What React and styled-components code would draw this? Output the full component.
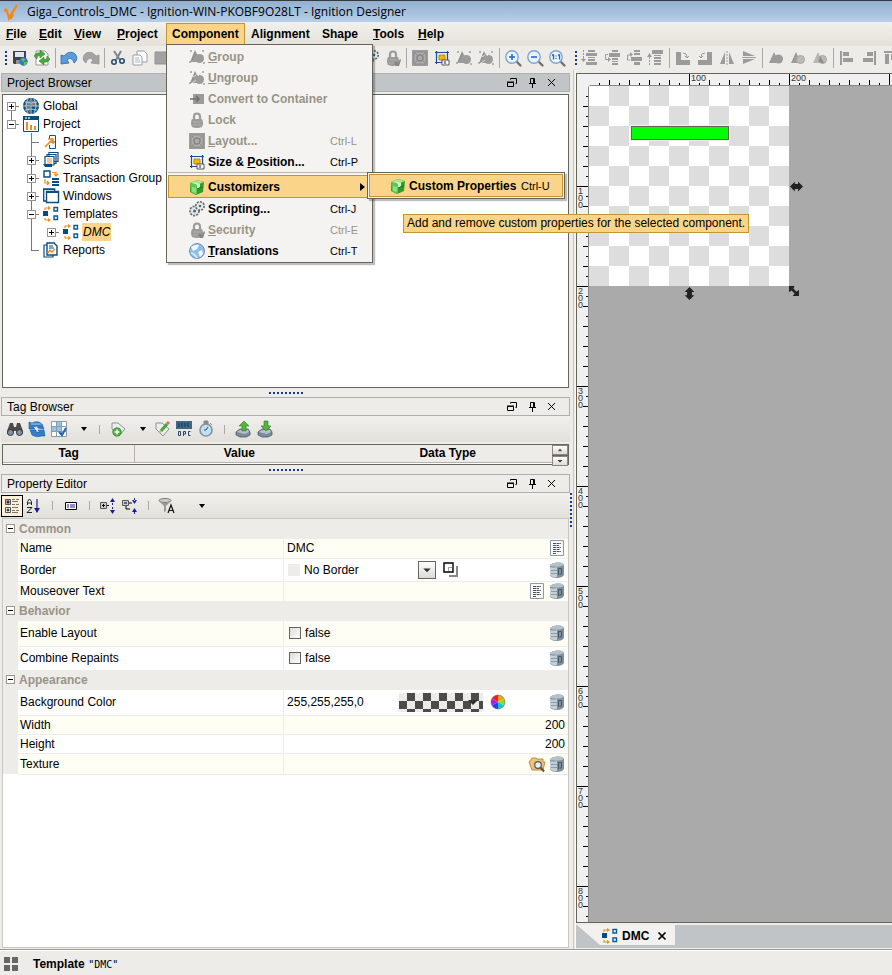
import React from "react";
import styled, { createGlobalStyle, css } from "styled-components";

const C = {
  face: "#edece8",
  line: "#b5b3ab",
  dark: "#66655c",
  amber: "#fad589",
  amberLine: "#c3952f",
  navy: "#1c3a7c",
  muted: "#989385",
  gray: "#9b9b9b",
};

const Global = createGlobalStyle`
  * { box-sizing: border-box; }
  body {
    margin: 0;
    background: ${C.face};
    color: #000;
    font: 12px/18px "Liberation Sans", Arial, sans-serif;
  }
  button, input, select { font: inherit; color: inherit; padding: 0; margin: 0; border: 0; background: none; border-radius: 0; }
  ul { list-style: none; margin: 0; padding: 0; }
`;

/* ---------- icons ---------- */

const G = C.gray;
const shapes = (
  <>
    <path d="M1 1h2v2H1zM13 1h2v2h-2zM0 12h2v2H0zM14 13h2v2h-2z" fill="#b3b3b3" />
    <path d="M6 1l2 4 3 3-1 5H1z" fill={G} />
    <circle cx="10.500" cy="9.500" r="4.500" fill={G} />
    <path d="M6 3L3 11" stroke="#8a8a8a" />
  </>
);
const magnifier = (
  <>
    <path d="M11 11l4.500 4.500" stroke="#77706a" strokeWidth="2.400" strokeLinecap="round" />
    <circle cx="7" cy="7" r="6.200" fill="#eaf4fd" stroke="#7fa3cf" strokeWidth="1.400" />
  </>
);
const box = (
  <>
    <path d="M1 4l7-3 7 2-1 10-7 3-6-3z" fill="#2f9c2c" />
    <path d="M1 4l7-3 7 2-7 3z" fill="#a5e58c" />
    <path d="M1 4l7 2v10l-6-3z" fill="#5cc84e" />
    <path d="M3 8l4 1v5l-4-1z" fill="#8fe07c" />
    <path d="M4 3l7 2v3l-3 2V6" fill="#d5f5c8" />
    <path d="M8 10l6-2" stroke="#1d7a1d" />
  </>
);
const template = (
  <>
    <path d="M0 5h5v5H0z" fill="#0b4a7c" />
    <path d="M2 4V2h4M2 12v2h4" fill="none" stroke="#ef8c20" strokeWidth="1.200" />
    <path d="M5 0l3 2-3 2zM5 12l3 2-3 2z" fill="#ef8c20" />
    <path d="M11 1.500h3.500V5H11zM11 10h3.500v3.500H11z" fill="#fff" stroke="#0b5a94" strokeWidth="1.400" />
  </>
);
const lockBody = (
  <>
    <path d="M5 8V4.500a3 3 0 016 0V8" fill="none" stroke={G} strokeWidth="2.200" />
    <path d="M3 7h10q2 4 0 8-5 2-10 0-2-4 0-8z" fill={G} />
    <path d="M4 10h8M4 13h8" stroke="#b0b0b0" />
  </>
);
const tagShape = <path d="M2 2l6 0 7 6-6 7-7-7z" fill="#e9edf0" stroke="#8b9399" />;
const tray = (
  <>
    <path d="M1 11l4-3h8l2 3v3l-4 2H5l-4-2z" fill="#7b8c9b" stroke="#4b5966" strokeWidth=".8" />
    <path d="M2 11l3-2h8l1 2-4 2z" fill="#b4c1cb" />
  </>
);

const ICONS = {
  logo: (
    <path d="M1 6c3 0 4 3 5 8L14 1M5 13l3 1 2-4M2 5l3 2" fill="none" stroke="#f08a1d" strokeWidth="2.400" />
  ),
  save: (
    <>
      <path d="M1 1h13v13H2l-1-1z" fill="#3c434a" />
      <path d="M3 2h9v5H3z" fill="#dfe8ef" />
      <path d="M4 10h6v4H4z" fill="#8d959c" />
      <circle cx="11.500" cy="11.500" r="4.200" fill="#3279c4" />
      <path d="M9 9l3-1 1 2-2 2zM12 12l3 0-1 3-2 0z" fill="#6cc04a" />
    </>
  ),
  sync: (
    <>
      <path d="M2 1h9l3 3v11H2z" fill="#fafafa" stroke="#9a9a9a" />
      <path d="M0 6q2-4 6-3V0l5 4-5 4V6Q3 5 3 9z" fill="#48a838" stroke="#2b7a22" strokeWidth=".5" />
      <path d="M16 9q-2 4-6 3v3l-5-4 5-4v2q3 1 3-3z" fill="#48a838" stroke="#2b7a22" strokeWidth=".5" />
    </>
  ),
  undo: <path d="M0 5v9l8-1-2-3c3-3 6-1 7 3 3-2 4-6 1-9-3-3-8-2-11 2z" fill="#5a9bd8" stroke="#2a68a8" strokeWidth=".8" />,
  redo: <path d="M16 5v9l-8-1 2-3c-3-3-6-1-7 3-3-2-4-6-1-9 3-3 8-2 11 2z" fill="#a3a3a3" stroke="#959595" strokeWidth=".8" />,
  cut: (
    <>
      <path d="M4 1l6 9M11 1L6 10" stroke="#7d868d" strokeWidth="2" />
      <circle cx="4" cy="12" r="2.200" fill="none" stroke="#24506f" strokeWidth="1.600" />
      <circle cx="12" cy="11" r="2.200" fill="none" stroke="#24506f" strokeWidth="1.600" />
    </>
  ),
  copy: (
    <>
      <path d="M5 1h7l3 3v8H5z" fill="#fbfbfb" stroke="#9aa0a4" />
      <path d="M1 5h7l2 2v8H1z" fill="#fbfbfb" stroke="#9aa0a4" />
      <path d="M3 8h4M3 10h5M3 12h5" stroke="#b5babd" />
    </>
  ),
  paste: <path d="M1 2h12v12H1z" fill="#a2a2a2" stroke="#939393" />,
  gear: (
    <>
      <circle cx="5.500" cy="10" r="4.600" fill="#d5dbdf" stroke="#5c666c" strokeWidth="1.600" strokeDasharray="2 1.200" />
      <circle cx="5.500" cy="10" r="3.400" fill="#dfe5e8" />
      <circle cx="5.500" cy="10" r="1.500" fill="#5c666c" />
      <circle cx="11" cy="5" r="4.200" fill="#dde3e6" stroke="#5c666c" strokeWidth="1.600" strokeDasharray="2 1.200" />
      <circle cx="11" cy="5" r="3" fill="#e6ebee" />
      <circle cx="11" cy="5" r="1.300" fill="#5c666c" />
    </>
  ),
  lock: lockBody,
  lockEdit: (
    <>
      {lockBody}
      <path d="M9 13l2-2 2 2 2-4 1 1-2 6h-3z" fill="#858585" />
    </>
  ),
  layout: (
    <>
      <path d="M0 0h16v16H0z" fill="#9c9c9c" />
      <path d="M2 2h12v12H2z" fill="#acacac" stroke="#8c8c8c" />
      <circle cx="8" cy="8" r="3" fill="none" stroke="#868686" strokeWidth="1.500" />
      <path d="M3 3l2 2M13 3l-2 2M3 13l2-2M13 13l-2-2" stroke="#868686" />
    </>
  ),
  size: (
    <>
      <path d="M2.500 1v13M13.500 1v13M1 2.500h14M1 12.500h14" stroke="#1d4a9e" strokeWidth="1.200" />
      <path d="M4 4h8v7H4z" fill="#f5f5f5" />
      <path d="M5 5h6v5H5z" fill="#f3b713" stroke="#b8860b" />
      <path d="M8 10h7v5H8z" fill="#fff" stroke="#555" />
      <path d="M10 11l2 3M12 11l-2 3" stroke="#555" strokeWidth=".8" />
    </>
  ),
  group: shapes,
  ungroup: (
    <>
      {shapes}
      <path d="M4 7l3-2M9 6l3-3M3 13l4-3" stroke="#ddd" />
    </>
  ),
  container: (
    <>
      <path d="M4 3h11v10H4z" fill={G} />
      <path d="M1 8h9M7 5l3 3-3 3" fill="none" stroke="#6f6f6f" strokeWidth="1.600" />
    </>
  ),
  box,
  world: (
    <>
      <circle cx="8" cy="8" r="7.500" fill="#8fbfe9" stroke="#5a7fa8" strokeWidth=".8" />
      <path d="M2 4q4-3 8-2L8 6 4 8zM9 9l4-2 1 4-3 3z" fill="#f0f8ff" />
      <path d="M2 10q4 1 6 5" stroke="#e0effc" fill="none" strokeWidth="1.500" />
    </>
  ),
  zoomIn: (
    <>
      {magnifier}
      <path d="M7 4v6M4 7h6" stroke="#1f62c4" strokeWidth="1.500" />
    </>
  ),
  zoomOut: (
    <>
      {magnifier}
      <path d="M4 7h6" stroke="#1f62c4" strokeWidth="1.500" />
    </>
  ),
  zoomOne: (
    <>
      {magnifier}
      <path d="M3 5h1.500v4.500M7 5.500v1M7 8v1M9 5h1.500v4.500" fill="none" stroke="#1f62c4" strokeWidth="1.300" />
    </>
  ),
  toBack: (
    <>
      <path d="M6 0h7v2H6zM4 3h11v3H4zM6 7h7v1H6zM6 9h7v2H6zM4 12h11v3H4z" fill={G} />
      <path d="M1.500 0v2M1.500 3v2M1.500 6v3" stroke={G} />
      <path d="M-1 9h5l-2.500 3z" fill={G} />
    </>
  ),
  backward: (
    <>
      <path d="M8 0h6v2H8zM5 3h11v4H5zM8 8h6v2H8zM8 11h6v1H8zM8 13h6v2H8z" fill={G} />
      <path d="M4 4.500H1.500v5H5" fill="none" stroke={G} />
      <path d="M4 7l3 2.500L4 12z" fill={G} />
    </>
  ),
  forward: (
    <>
      <path d="M8 0h6v2H8zM8 3h6v2H8zM5 7h11v4H5zM8 12h6v3H8z" fill={G} />
      <path d="M4 10H1.500V5H5" fill="none" stroke={G} />
      <path d="M4 2l3 2.500L4 7z" fill={G} />
    </>
  ),
  toFront: (
    <>
      <path d="M4 0h11v4H4zM6 5h7v1H6zM6 7h7v2H6zM6 10h7v2H6zM6 13h7v2H6z" fill={G} />
      <path d="M1.500 7v2M1.500 10v2M1.500 13v2" stroke={G} />
      <path d="M-1 7h5L1.500 3z" fill={G} />
    </>
  ),
  rotateR: (
    <>
      <path d="M1 2h5v8h9v5H1z" fill={G} />
      <path d="M8 3q4 0 4 4M10 6l2 2 2-2" fill="none" stroke={G} />
    </>
  ),
  rotateL: (
    <>
      <path d="M15 2h-5v8H1v5h14z" fill={G} />
      <path d="M8 3Q4 3 4 7M2 6l2 2 2-2" fill="none" stroke={G} />
    </>
  ),
  flipH: (
    <>
      <path d="M6 2v12H1zM10 2v12h5z" fill={G} />
      <path d="M8 1v14" stroke={G} strokeDasharray="2 1" />
    </>
  ),
  flipV: (
    <>
      <path d="M2 1l12 5H2zM2 14l12-5H2z" fill={G} />
      <path d="M1 7.500h14" stroke={G} />
    </>
  ),
  union: (
    <>
      <path d="M6 2l5 11H1z" fill={G} />
      <circle cx="10.500" cy="9" r="4.500" fill={G} />
    </>
  ),
  diff: (
    <>
      <path d="M6 2l5 11H1z" fill={G} />
      <circle cx="10.500" cy="9.500" r="4" fill="#bbb" stroke="#a5a5a5" />
    </>
  ),
  intersect: (
    <>
      <path d="M6 2l5 11H1z" fill="#b8b8b8" />
      <circle cx="10.500" cy="9.500" r="4" fill="#bbb" stroke="#a5a5a5" />
      <path d="M8 6l4 7-5-1z" fill="#8a8a8a" />
    </>
  ),
  alignL: <path d="M1 1h2v14H1zM4 2h6v4H4zM4 8h10v4H4z" fill={G} />,
  alignR: <path d="M13 1h2v14h-2zM6 2h6v4H6zM2 8h10v4H2z" fill={G} />,
  alignT: <path d="M1 1h14v2H1zM2 4h4v10H2zM8 4h4v6H8z" fill={G} />,
  globe: (
    <>
      <circle cx="8" cy="8" r="8" fill="#0b4d80" />
      <path d="M3 4l4-2v6H2zM9 2l4 2 1 4H9zM3 9h4v5l-3-2z" fill="#ef9a3c" opacity=".6" />
      <path d="M0 8h16M8 0v16M2 4q6 2 12 0M2 12q6-2 12 0M5 1q-4 7 0 14M11 1q4 7 0 14" fill="none" stroke="#a9cde6" />
    </>
  ),
  project: (
    <>
      <path d="M.5.5h15v15H.5z" fill="#fff" stroke="#0b4d80" />
      <path d="M0 0h16v4H0z" fill="#0b4d80" />
      <path d="M2 1h2v2H2zM5 1h2v2H5z" fill="#8ab8d8" />
      <path d="M3 6h2v8H3zM7 9h2v5H7zM11 10h2v4h-2z" fill="#ef8c20" />
    </>
  ),
  properties: (
    <>
      <path d="M6.500 5V1.500h6v13h-6V11M6.500 8h6" fill="#fff" stroke="#0b5a94" />
      <path d="M2 13L9 6M5 5l5 0 0 5" fill="none" stroke="#ef8c20" strokeWidth="1.600" />
    </>
  ),
  scripts: (
    <>
      <path d="M6 .5h9v9H6zM4 2.500h9v9H4z" fill="#fff" stroke="#0b4d80" strokeWidth="1.200" />
      <path d="M2 4.500h9V13H2z" fill="#fff" stroke="#0b4d80" strokeWidth="1.200" />
      <path d="M4 7h5M4 9h5M4 11h5" stroke="#ef8c20" />
      <path d="M0 12h9v3H2z" fill="#0b4d80" />
    </>
  ),
  transaction: (
    <>
      <path d="M1 1h6v6H1z" fill="#fff" stroke="#0b4d80" strokeWidth="1.400" />
      <path d="M9 2.500h4v3M11 4l2 2 2-2M2 9v4h4M4 11l2 2-2 2" fill="none" stroke="#ef8c20" strokeWidth="1.200" />
      <path d="M9 8h7v2H9zM9 11h7v2H9zM9 14h7v2H9z" fill="#0b4d80" />
    </>
  ),
  windows: (
    <>
      <path d="M.7 1h11v12H.7z" fill="#fff" stroke="#0b4d80" strokeWidth="1.300" />
      <path d="M3.500 3.500h12v11h-12z" fill="#fff" stroke="#0b4d80" strokeWidth="1.400" />
      <path d="M3 3h13v2H3zM0 1h12v1H0z" fill="#0b4d80" />
    </>
  ),
  template,
  reports: (
    <>
      <path d="M1 3h9v12H1z" fill="#fff" stroke="#0b4d80" strokeWidth="1.200" />
      <path d="M4 1h7l3 3v9H4z" fill="#fff" stroke="#0b4d80" strokeWidth="1.400" />
      <path d="M6 4h4M6 6h5" stroke="#0b4d80" />
      <path d="M5 11l2-3 2 2 3-3" fill="none" stroke="#ef8c20" strokeWidth="1.400" />
    </>
  ),
  float: <path d="M3.500 7.500h6v4h-6zM3 7h7M6.500 4.500V3.500h6v5h-1" fill="none" stroke="#000" />,
  pin: <path d="M6.500 3.500h4v5h-4zM9.500 4v4M5 8.500h7M8.500 9v4" fill="none" stroke="#000" />,
  close: <path d="M4 4l7 7M11 4l-7 7" stroke="#000" />,
  closeBold: <path d="M4 4l8 8M12 4l-8 8" stroke="#000" strokeWidth="2" />,
  binoculars: (
    <>
      <path d="M3 2h3l1 4h2l1-4h3l3 8v3H10l-1-3H7l-1 3H0v-3z" fill="#4d4a49" />
      <circle cx="3.500" cy="11.500" r="3" fill="#7d93a8" stroke="#333" />
      <circle cx="12.500" cy="11.500" r="3" fill="#7d93a8" stroke="#333" />
    </>
  ),
  refresh: (
    <>
      <path d="M0 1l3 1q6-3 10 1l2 5-6-1-1-2-4 1 2 2-6 0z" fill="#2f80c8" stroke="#185a98" strokeWidth=".6" />
      <path d="M16 15l-3 0q-6 2-10-1L1 9l6 0 0 2 4 0-2-2 6 0z" fill="#2f80c8" stroke="#185a98" strokeWidth=".6" />
      <path d="M2 3l5 0 5 0" stroke="#9fd0f5" fill="none" />
    </>
  ),
  grid: (
    <>
      <path d="M.5.5h15v15H.5z" fill="#fff" stroke="#8d9aa5" />
      <path d="M6 1h5v4H6zM1 6h4v4H1zM6 6h5v4H6z" fill="#8fc4ee" />
      <path d="M5.500 0v16M10.500 0v16M0 5.500h16M0 10.500h16" stroke="#8d9aa5" />
      <path d="M8 11l3 3 4-7" fill="none" stroke="#1e66b0" strokeWidth="2" />
    </>
  ),
  tagAdd: (
    <>
      {tagShape}
      <circle cx="7" cy="11" r="4.300" fill="#4cae3c" stroke="#2d7a24" strokeWidth=".6" />
      <path d="M7 8.500v5M4.500 11h5" stroke="#fff" strokeWidth="1.500" />
    </>
  ),
  tagEdit: (
    <>
      {tagShape}
      <path d="M7 10l6-7" stroke="#46a838" strokeWidth="3" />
      <path d="M13 3l2-2" stroke="#e06a6a" strokeWidth="3" />
      <path d="M5 12l2-2" stroke="#e0b060" strokeWidth="2" />
    </>
  ),
  opc: (
    <>
      <path d="M0 0h16v8H0z" fill="#3e6784" />
      <path d="M3 2v4M6 2v4M9 2v4M12 2v4" stroke="#1c3547" />
      <path d="M2.500 10.500h2v4h-2zM7.500 15v-4.500h2v2.500h-2M14.500 10.500h-2v4h2" fill="none" stroke="#274a66" />
    </>
  ),
  stopwatch: (
    <>
      <path d="M6 0h4v3H6zM12 2l2 2" fill="#888" stroke="#888" />
      <circle cx="8" cy="9" r="6" fill="#bfe0fa" stroke="#8a9198" strokeWidth="1.600" />
      <path d="M8 9l2-3M8 9H6" stroke="#31506c" />
    </>
  ),
  upload: (
    <>
      {tray}
      <path d="M9 0l5 5h-3v5H7V5H4z" fill="#55b53a" stroke="#2e7d1e" strokeWidth=".6" />
    </>
  ),
  download: (
    <>
      {tray}
      <path d="M9 10l5-5h-3V0H7v5H4z" fill="#55b53a" stroke="#2e7d1e" strokeWidth=".6" />
    </>
  ),
  categorized: (
    <>
      <path d="M1.500 1.500h5v5h-5z" fill="#bbb" stroke="#555" />
      <path d="M1.500 9.500h5v5h-5z" fill="#fff" stroke="#555" />
      <path d="M2.500 4h3M4 2.500v3M2.500 12h3M4 10.500v3" stroke="#000" />
      <path d="M8 1.500h3M12 1.500h3M8 3.500h6M8 6.500h3M12 6.500h3M8 9.500h6M8 12.500h3M12 12.500h3M8 14.500h6" stroke="#777" />
    </>
  ),
  sort: (
    <>
      <path d="M1.500 7V3.500L3.500 1l2 2.500V7M1.500 5h4M1 9.500h5l-5 5h5" fill="none" stroke="#222" />
      <path d="M11 1v10" stroke="#1d1d8f" strokeWidth="1.200" />
      <path d="M8 10h6l-3 5z" fill="#1d1d8f" />
    </>
  ),
  description: (
    <>
      <path d="M2.500 4.500h11v7h-11z" fill="#fff" stroke="#000" />
      <path d="M4 7h2M7 7h5M4 9h2M7 9h5" stroke="#1d1d8f" />
    </>
  ),
  expand: (
    <>
      <path d="M.5 4.500h6v6h-6z" fill="#ccc" stroke="#555" />
      <path d="M2 7.500h3M3.500 6v3M7 7.500h2" stroke="#000" />
      <path d="M10 4l2.500-4L15 4zM10 12l2.500 4 2.500-4zM12 5h1v2h-1zM12 9h1v2h-1z" fill="#1d1d8f" />
    </>
  ),
  collapse: (
    <>
      <path d="M.5 2.500h6v5h-6z" fill="#ccc" stroke="#555" />
      <path d="M2 5h3M7 5h3M4 8v3h4" fill="none" stroke="#000" />
      <path d="M10 2l2.500 4L15 2zM10 14l2.500-4 2.500 4zM12 0h1v3h-1zM12 13h1v3h-1z" fill="#1d1d8f" />
    </>
  ),
  filter: (
    <>
      <ellipse cx="6" cy="2.500" rx="6" ry="2" fill="#ccc" stroke="#777" />
      <path d="M0 3l5 5v6l2-1V8l5-5-6 2z" fill="#999" />
      <path d="M9 15l3-8 3 8M10 12.500h4" fill="none" stroke="#111" strokeWidth="1.200" />
    </>
  ),
  note: (
    <>
      <path d="M1.500.5h13v15h-13z" fill="#f6f9fb" stroke="#8c9aa6" />
      <path d="M4 3.500h8M4 5.500h6M4 7.500h8M4 9.500h7M4 11.500h8M4 13.500h3" stroke="#4d5257" strokeDasharray="3 .6" />
    </>
  ),
  binding: (
    <>
      <path d="M1 3q3-3 8-2.500Q14 0 15 3v10q-2 3-7 3-6 0-7-3z" fill="#7d8f9c" />
      <path d="M1 3q3-3 8-2.500Q14 0 15 3q-4 3-14 1z" fill="#b3c1cb" />
      <path d="M1 5q4 1 7 0v10q-4 1-7-2z" fill="#c3ced6" />
      <path d="M2 8.500h6M2 11.500h6" stroke="#8c9ca8" />
      <path d="M9.500 13V6.500h3V12h-2" fill="none" stroke="#4a5964" />
    </>
  ),
  folder: (
    <>
      <path d="M0 6l3-4h4l1 1h6v3l2 0-2 8H3z" fill="#ecc377" stroke="#a87b36" strokeWidth=".8" />
      <circle cx="9" cy="9" r="3.300" fill="#e3f0f8" stroke="#555" strokeWidth="1.200" />
      <path d="M11.500 11.500l3.500 4" stroke="#7a4a20" strokeWidth="2" />
    </>
  ),
  bevel: (
    <>
      <path d="M6 14h8V4" fill="none" stroke="#888" strokeWidth="2" />
      <path d="M1 1h9v9H1z" fill="none" stroke="#000" strokeWidth="1.400" />
      <path d="M5.500 9V5.500H9" fill="none" stroke="#999" />
    </>
  ),
  wheel: (
    <>
      <path d="M8 8V1a7 7 0 016 3.500z" fill="#f0a020" />
      <path d="M8 8l6-3.500a7 7 0 010 7z" fill="#8adf20" />
      <path d="M8 8l6 3.500A7 7 0 018 15z" fill="#18c8c8" />
      <path d="M8 8v7a7 7 0 01-6-3.500z" fill="#2040f0" />
      <path d="M8 8l-6 3.500a7 7 0 010-7z" fill="#b020e0" />
      <path d="M8 8L2 4.500A7 7 0 018 1z" fill="#f02020" />
      <circle cx="8" cy="8" r="7" fill="none" stroke="#666" strokeWidth=".6" />
    </>
  ),
  tiles: <path d="M1 1h6v6H1zM9 1h6v6H9zM1 9h6v6H1zM9 9h6v6H9z" fill="#666" />,
  arrowsH: <path d="M0 8l6-6v3h4V2l6 6-6 6v-3H6v3z" fill="#222" />,
  arrowsD: <path d="M0 0h9L7 4l5 5 4-3v10H6l3-4-5-5-4 3z" fill="#222" />,
  caret: <path d="M5 6h6l-3 4z" fill="#000" />,
  caretRight: <path d="M8 4l5 4-5 4z" fill="#000" />,
  caretUp: <path d="M2 11h12L8 4z" fill="#555" />,
  caretDown: <path d="M3 6h10l-5 5z" fill="#333" />,
};

const Svg = styled.svg`
  display: block;
  flex: none;
  width: ${(p) => p.$size}px;
  height: ${(p) => p.$size}px;
  overflow: visible;
`;
const Icon = ({ name, size = 16 }) => (
  <Svg viewBox="0 0 16 16" $size={size} aria-hidden="true">
    {ICONS[name]}
  </Svg>
);

/* ---------- frame ---------- */

const Window = styled.div`
  display: flex;
  flex-direction: column;
  height: 100vh;
  min-height: 700px;
  overflow: hidden;
`;
const TitleBar = styled.header`
  display: flex;
  align-items: center;
  gap: 8px;
  height: 22px;
  flex: none;
  padding: 0 3px;
  border-top: 1px solid #35383c;
  background: linear-gradient(#93b0d0, #b6cee8);
  font: 12px/20px "Open Sans", "Noto Sans", sans-serif;
`;
const MenuBar = styled.ul`
  display: flex;
  height: 24px;
  flex: none;
  padding-top: 1px;
  background: linear-gradient(#f1f0ec, #e4e1da);
  font-weight: bold;
`;
const MenuSlot = styled.li`
  position: relative;
  width: ${(p) => p.$w}px;
`;
const MenuButton = styled.button`
  width: 100%;
  height: 22px;
  padding: 0 5px;
  text-align: left;
  border: 1px solid ${(p) => (p.$open ? C.amberLine : "transparent")};
  background: ${(p) => (p.$open ? C.amber : "none")};
  white-space: nowrap;
`;
const Toolbars = styled.div`
  display: grid;
  grid-template-columns: minmax(0, 570fr) minmax(0, 322fr);
  height: 24px;
  flex: none;
  background: ${C.face};
`;
const Toolbar = styled.div`
  display: flex;
  align-items: center;
  justify-content: space-between;
  padding: 0 2px 0 5px;
  min-width: 0;
  overflow: hidden;
`;
const ToolGroup = styled.div`
  display: flex;
  align-items: center;
  flex: none;
`;
const ToolButton = styled.button`
  display: grid;
  place-items: center;
  flex: none;
  width: 22px;
  height: 22px;
  ${(p) =>
    p.$pressed &&
    css`
      border: 1px solid #000;
      background: #fdf0d6;
    `}
`;
const Rule = styled.i`
  flex: none;
  width: 1px;
  height: 20px;
  margin: 0 2px;
  background: #aaa8a2;
`;
const ShortRule = styled(Rule)`
  height: 9px;
  margin: 0 7px;
`;
const Dots = styled.i`
  flex: none;
  ${(p) =>
    p.$row
      ? css`
          width: 34px;
          height: 2px;
          background: repeating-linear-gradient(90deg, ${C.navy} 0 2px, transparent 2px 4px);
        `
      : css`
          width: 2px;
          height: ${p.$len}px;
          background: repeating-linear-gradient(${C.navy} 0 2px, transparent 2px 4px);
        `}
`;
const Grip = styled.div`
  padding-right: 2px;
`;

/* ---------- menu popups ---------- */

const Popup = styled.ul`
  position: absolute;
  z-index: 5;
  top: 21px;
  left: 0;
  width: 207px;
  padding: 1px;
  border: 1px solid ${C.dark};
  background: #f4f3f1;
  box-shadow: 2px 2px 1px rgba(0, 0, 0, 0.25);
`;
const PopupRow = styled.li`
  position: relative;
`;
const PopupButton = styled.button`
  display: flex;
  align-items: center;
  gap: 3px;
  width: 100%;
  height: ${(p) => (p.$hot ? 23 : 21)}px;
  padding: 0 ${(p) => (p.$hot ? 2 : 15)}px 0 20px;
  border: 1px solid ${(p) => (p.$hot ? C.amberLine : "transparent")};
  background: ${(p) => (p.$hot ? C.amber : "none")};
  color: ${(p) => (p.disabled ? C.muted : "#000")};
  font-weight: bold;
  white-space: nowrap;
`;
const PopupLabel = styled.span`
  flex: 1;
  text-align: left;
`;
const Shortcut = styled.span`
  width: 25px;
  text-align: left;
  font-size: 11px;
  font-weight: normal;
`;
const PopupRule = styled.li`
  height: 3px;
  border-top: 1px solid #b9b7b0;
`;
const SubPopup = styled(Popup)`
  top: -3px;
  left: calc(100% - 4px);
  width: 198px;
  ${PopupButton} {
    padding-right: 16px;
  }
`;
const Tooltip = styled.div`
  position: absolute;
  z-index: 6;
  top: 40px;
  left: 34px;
  height: 19px;
  padding: 0 3px;
  border: 1px solid ${C.amberLine};
  background: ${C.amber};
  line-height: 17px;
  font-weight: normal;
  white-space: nowrap;
`;

/* ---------- docked panels ---------- */

const Main = styled.main`
  display: grid;
  grid-template-columns: minmax(0, 570fr) 6px minmax(0, 316fr);
  flex: 1;
  min-height: 0;
`;
const LeftDock = styled.div`
  display: flex;
  flex-direction: column;
  min-height: 0;
  padding: 3px 0 1px 1px;
`;
const Panel = styled.section`
  display: flex;
  flex-direction: column;
  min-height: 0;
  flex: ${(p) => (p.$grow ? `${p.$grow} 1 0` : "none")};
`;
const PanelHead = styled.div`
  display: flex;
  align-items: center;
  flex: none;
  height: 19px;
  padding: 0 7px 0 5px;
  border: 1px solid #aeb0ae;
  background: ${(p) => (p.$active ? "#c1c5c8" : C.face)};
`;
const PanelTitle = styled.h2`
  flex: 1;
  margin: 0;
  font: inherit;
`;
const PanelButton = styled.button`
  display: grid;
  place-items: center;
  width: 20px;
  height: 16px;
`;
const HSplit = styled.div`
  display: grid;
  place-items: center;
  flex: none;
  height: 9px;
`;
const VSplit = styled.div`
  display: flex;
  align-items: center;
  border-right: 1px solid #f7f7f5;
  background: linear-gradient(90deg, transparent 3px, #c9c8c3 3px 4px, transparent 4px);
`;
const TreeBox = styled.div`
  flex: 1;
  min-height: 0;
  margin: 2px 1px 0;
  padding-top: 2px;
  overflow: hidden;
  border: 1px solid ${C.dark};
  background: #fff;
`;
const TreeRow = styled.li`
  display: flex;
  align-items: center;
  height: 18px;
`;
const Guide = styled.span`
  display: flex;
  align-items: center;
  flex: none;
  width: 20px;
  height: 18px;
  padding-left: 4px;
  background-repeat: no-repeat;
  background-image: linear-gradient(#777, #777), linear-gradient(#777, #777);
  background-size: 1px ${(p) => ({ full: 18, up: 9, down: 9 }[p.$v] || 0)}px, ${(p) => (p.$h ? 8 : 0)}px 1px;
  background-position: 8px ${(p) => (p.$v === "down" ? 9 : 0)}px, 8px 9px;
`;
const Expander = styled.button`
  width: 9px;
  height: 9px;
  border: 1px solid #98968a;
  background-color: #fff;
  background-repeat: no-repeat;
  background-position: center;
  background-image: linear-gradient(#000, #000), linear-gradient(#000, #000);
  background-size: 5px 1px, ${(p) => (p.$open ? "0 0" : "1px 5px")};
`;
const TreeLabel = styled.span`
  margin-left: 3px;
  padding-right: 1px;
  padding-left: 1px;
  white-space: nowrap;
  ${(p) =>
    p.$selected &&
    css`
      background: ${C.amber};
      font-style: italic;
    `}
`;
const DockTools = styled.div`
  display: flex;
  align-items: center;
  flex: none;
  height: ${(p) => p.$h}px;
  padding-left: ${(p) => p.$pad}px;
  background: linear-gradient(#f1f0ed, #e2e0da);
`;
const DropButton = styled.button`
  width: ${(p) => p.$w}px;
  height: 22px;
  padding-left: ${(p) => p.$w - 16}px;
`;
const TagBox = styled.div`
  display: grid;
  grid-template-columns: 1fr 16px;
  flex: none;
  height: 21px;
  margin: 2px 1px 0;
  border: 1px solid ${C.dark};
  background: #fff;
`;
const TagTable = styled.table`
  align-self: start;
  width: 100%;
  table-layout: fixed;
  border-collapse: collapse;
  background: ${C.face};
  th {
    height: 17px;
    padding: 0;
    line-height: 16px;
    border-bottom: 1px solid ${C.line};
    border-right: 1px solid ${C.line};
  }
  th:nth-child(2), th:last-child { border-right: 0; }
`;
const Spinner = styled.div`
  display: grid;
  grid-template-rows: 1fr 1fr;
  background: ${C.dark};
  gap: 1px;
`;
const SpinButton = styled.button`
  display: grid;
  place-items: center;
  border: 1px solid #8a887e;
  background: linear-gradient(#fff, #dcdad4);
`;

/* ---------- property table ---------- */

const PropBox = styled.div`
  flex: 1;
  min-height: 0;
  margin: 0 1px;
  overflow: hidden;
  border: 1px solid #c8c7c2;
  background: #fff;
`;
const PropTable = styled.table`
  width: 100%;
  table-layout: fixed;
  border-collapse: collapse;
  td, th { padding: 0; font-weight: normal; text-align: left; }
`;
const GutterCol = styled.col`
  width: 15px;
`;
const NameCol = styled.col`
  width: 47%;
`;
const PropRow = styled.tr`
  height: ${(p) => p.$h}px;
  background: ${(p) => (p.$tint ? "#fffef4" : "#fff")};
`;
const Gutter = styled.td`
  background: ${C.face};
  vertical-align: top;
`;
const CategoryRow = styled.tr`
  height: 20px;
  background: ${C.face};
  th {
    padding-left: 1px;
    color: #9a9388;
    font-weight: bold;
    font-size: 12px;
  }
`;
const CategoryGutter = styled(Gutter)`
  && { padding: 5px 0 0 3px; line-height: 0; }
`;
const NameCell = styled.th`
  && { padding-left: 2px; }
  border-bottom: 1px solid ${C.face};
  border-right: 1px solid ${C.face};
`;
const ValueCell = styled.td`
  border-bottom: 1px solid ${C.face};
`;
const ValueLine = styled.div`
  display: flex;
  align-items: center;
  gap: 4px;
  height: ${(p) => p.$h - 1}px;
  padding: 0 3px;
`;
const TextValue = styled.input`
  flex: 1;
  min-width: 0;
  height: 16px;
  text-align: ${(p) => (p.$right ? "right" : "left")};
  outline: 0;
`;
const ColorText = styled(TextValue)`
  flex: 0 0 108px;
`;
const CellButton = styled.button`
  display: grid;
  place-items: center;
  width: 16px;
  height: 17px;
`;
const Fill = styled.span`
  flex: 1;
`;
const CheckLabel = styled.label`
  display: flex;
  align-items: center;
  gap: 4px;
  padding-left: 2px;
`;
const Check = styled.input`
  appearance: none;
  width: 12px;
  height: 12px;
  border: 1px solid ${C.dark};
  background: linear-gradient(135deg, #dddbd6, #fff);
`;
const Swatch = styled.i`
  width: 12px;
  height: 12px;
  margin-left: 1px;
  background: ${C.face};
`;
const SelectWrap = styled.span`
  display: grid;
  grid-template-columns: 114px 18px;
  align-items: center;
`;
const BorderSelect = styled.select`
  grid-area: 1 / 1 / 2 / 3;
  height: 18px;
  appearance: none;
  outline: 0;
`;
const SelectArrow = styled.span`
  grid-area: 1 / 2;
  display: grid;
  place-items: center;
  height: 18px;
  border: 1px solid ${C.dark};
  background: linear-gradient(#fff, #dcdad4);
  pointer-events: none;
`;
const ColorButton = styled.button`
  display: flex;
  align-items: center;
  justify-content: flex-end;
  width: 84px;
  height: 19px;
  padding-right: 2px;
  background: repeating-conic-gradient(#4b4b4b 0 25%, #ecebe7 0 50%) 0 0 / 16px 16px;
`;
const WheelButton = styled(CellButton)`
  margin-left: 3px;
`;

/* ---------- design canvas ---------- */

const Editor = styled.div`
  display: flex;
  flex-direction: column;
  min-width: 0;
  min-height: 0;
  padding: 3px 0 1px;
`;
const Stage = styled.div`
  display: grid;
  grid-template-columns: 12px minmax(0, 1fr);
  grid-template-rows: 12px minmax(0, 1fr);
  flex: 1;
  min-height: 0;
  overflow: hidden;
  border: solid ${C.dark};
  border-width: 1px 0 1px 1px;
  background: #f0f0f0;
`;
const tick = (dir) => `linear-gradient(${dir}, #000 1px, transparent 1px)`;
const HRuler = styled.div`
  display: flex;
  overflow: hidden;
  border-left: 1px solid #f0f0f0;
  border-bottom: 1px solid #888;
  background-image: ${tick("90deg")}, ${tick("90deg")}, ${tick("90deg")};
  background-size: 10px 2px, 20px 5px, 100px 11px;
  background-position: -1px 100%;
  background-repeat: repeat-x;
  color: #333;
  font-size: 9px;
  line-height: 9px;
`;
const HMark = styled.span`
  flex: none;
  width: 100px;
  padding-left: 1px;
`;
const VRuler = styled.div`
  display: flex;
  flex-direction: column;
  overflow: hidden;
  border-top: 1px solid #f0f0f0;
  border-right: 1px solid #888;
  background-image: ${tick("180deg")}, ${tick("180deg")}, ${tick("180deg")};
  background-size: 2px 10px, 5px 20px, 11px 100px;
  background-position: 100% -1px;
  background-repeat: repeat-y;
  color: #333;
  font-size: 9px;
  line-height: 7px;
`;
const VMark = styled.span`
  flex: none;
  width: 7px;
  height: 100px;
  padding: 1px 0 0 1px;
  word-break: break-all;
`;
const Canvas = styled.div`
  position: relative;
  overflow: hidden;
  background: #aaa;
`;
const TemplateArea = styled.div`
  width: 200px;
  height: 200px;
  background: repeating-conic-gradient(#ddd 0 25%, #fff 0 50%) 0 0 / 40px 40px;
`;
const GreenBar = styled.div`
  position: absolute;
  left: 42px;
  top: 40px;
  width: 98px;
  height: 14px;
  border: 1px solid #6a6355;
  background: #0f0;
  box-shadow: 0 0 0 1px #f1f0ea;
`;
const Handle = styled.span`
  position: absolute;
  left: ${(p) => p.$x}px;
  top: ${(p) => p.$y}px;
  rotate: ${(p) => p.$turn || 0}deg;
`;
const TabStrip = styled.div`
  display: flex;
  flex: none;
  height: 23px;
  margin-top: 2px;
  padding-left: 1px;
  background: #c0c4c7;
`;
const Tab = styled.div`
  display: flex;
  align-items: center;
  gap: 4px;
  height: 20px;
  padding: 2px 6px 0 25px;
  background: #f2f1ef;
  clip-path: polygon(0 0, 100% 0, 100% 100%, 23px 100%);
  font-weight: bold;
`;
const TabClose = styled.button`
  padding: 0 0 0 2px;
`;
const StatusBar = styled.footer`
  display: flex;
  align-items: center;
  gap: 14px;
  flex: none;
  height: 26px;
  padding: 2px 3px 0;
  border-top: 1px solid #9d9c97;
  box-shadow: inset 0 1px #fff;
`;
const StatusName = styled.span`
  font: 10px "DejaVu Sans Mono", monospace;
`;

/* ---------- data ---------- */

const MENUS = [
  ["_File", 33], ["_Edit", 35], ["_View", 43], ["_Project", 55], ["Component", 79],
  ["Alignment", 71], ["Shape", 51], ["_Tools", 45], ["_Help", 40],
];
const COMPONENT_MENU = [
  { icon: "group", label: "_Group", off: true },
  { icon: "ungroup", label: "_Ungroup", off: true },
  { icon: "container", label: "Convert to Container", off: true },
  { icon: "lock", label: "Lock", off: true },
  { icon: "layout", label: "_Layout...", key: "Ctrl-L", off: true },
  { icon: "size", label: "Size & _Position...", key: "Ctrl-P" },
  { rule: true },
  { icon: "box", label: "Customizers", sub: true },
  { icon: "gear", label: "Scripting...", key: "Ctrl-J" },
  { icon: "lockEdit", label: "_Security", key: "Ctrl-E", off: true },
  { icon: "world", label: "_Translations", key: "Ctrl-T" },
];
const TREE = [
  { g: [["down", true, "+"]], icon: "globe", label: "Global" },
  { g: [["up", true, "-"]], icon: "project", label: "Project" },
  { g: [[], ["full", true]], icon: "properties", label: "Properties" },
  { g: [[], ["full", true, "+"]], icon: "scripts", label: "Scripts" },
  { g: [[], ["full", true, "+"]], icon: "transaction", label: "Transaction Group" },
  { g: [[], ["full", true, "+"]], icon: "windows", label: "Windows" },
  { g: [[], ["full", true, "-"]], icon: "template", label: "Templates" },
  { g: [[], ["full"], ["", true, "+"]], icon: "template", label: "DMC", selected: true },
  { g: [[], ["up", true]], icon: "reports", label: "Reports" },
];
const H_MARKS = ["", 100, 200];
const V_MARKS = ["", 100, 200, 300, 400, 500, 600, 700, 800];
const LEFT_TOOLS = ["save", "sync", "|", "undo", "redo", "|", "cut", "copy", "paste"];
const MID_TOOLS = ["gear", "lockEdit", "|", "layout", "size", "group", "ungroup", "|", "zoomIn", "zoomOut", "zoomOne"];
const RIGHT_TOOLS = [
  "toBack", "backward", "forward", "toFront", "|", "rotateR", "rotateL", "flipH", "flipV", "|",
  "union", "diff", "intersect", "|", "alignL", "alignR", "alignT",
];

/* ---------- pieces ---------- */

const Mnemonic = ({ text }) => {
  const i = text.indexOf("_");
  if (i < 0) return text;
  return (
    <>
      {text.slice(0, i)}
      <u>{text[i + 1]}</u>
      {text.slice(i + 2)}
    </>
  );
};

const Tools = ({ items }) => (
  <ToolGroup>
    {items.map((name, i) =>
      name === "|" ? (
        <Rule key={i} />
      ) : (
        <ToolButton key={i} aria-label={name}>
          <Icon name={name} />
        </ToolButton>
      )
    )}
  </ToolGroup>
);

const Tool = ({ name, pressed }) => (
  <ToolButton aria-label={name} $pressed={pressed}>
    <Icon name={name} />
  </ToolButton>
);

const Drop = ({ w }) => (
  <DropButton $w={w} aria-label="More">
    <Icon name="caret" />
  </DropButton>
);

const Head = ({ title, active }) => (
  <PanelHead $active={active}>
    <PanelTitle>{title}</PanelTitle>
    {["float", "pin", "close"].map((n) => (
      <PanelButton key={n} aria-label={n}>
        <Icon name={n} />
      </PanelButton>
    ))}
  </PanelHead>
);

const ComponentMenu = () => (
  <Popup role="menu">
    {COMPONENT_MENU.map((m, i) =>
      m.rule ? (
        <PopupRule key={i} role="separator" />
      ) : (
        <PopupRow key={i} role="none">
          <PopupButton role="menuitem" disabled={m.off} $hot={m.sub}>
            <Icon name={m.icon} />
            <PopupLabel>
              <Mnemonic text={m.label} />
            </PopupLabel>
            {m.key && <Shortcut>{m.key}</Shortcut>}
            {m.sub && <Icon name="caretRight" />}
          </PopupButton>
          {m.sub && (
            <SubPopup role="menu">
              <PopupRow role="none">
                <PopupButton role="menuitem" $hot>
                  <Icon name="box" />
                  <PopupLabel>Custom Properties</PopupLabel>
                  <Shortcut>Ctrl-U</Shortcut>
                </PopupButton>
                <Tooltip role="tooltip">
                  Add and remove custom properties for the selected component.
                </Tooltip>
              </PopupRow>
            </SubPopup>
          )}
        </PopupRow>
      )
    )}
  </Popup>
);

const Category = ({ label }) => (
  <CategoryRow>
    <CategoryGutter>
      <Expander $open aria-label={`Collapse ${label}`} />
    </CategoryGutter>
    <th colSpan={2}>{label}</th>
  </CategoryRow>
);

const Prop = ({ label, h, tint, children, icons = [] }) => (
  <PropRow $h={h} $tint={tint}>
    <Gutter />
    <NameCell scope="row">{label}</NameCell>
    <ValueCell>
      <ValueLine $h={h}>
        {children}
        {icons.map((n) => (
          <CellButton key={n} aria-label={`${label} ${n}`}>
            <Icon name={n} />
          </CellButton>
        ))}
      </ValueLine>
    </ValueCell>
  </PropRow>
);

const BoolValue = ({ name }) => (
  <>
    <CheckLabel>
      <Check type="checkbox" name={name} />
      false
    </CheckLabel>
    <Fill />
  </>
);

const Properties = () => (
  <PropTable>
    <colgroup>
      <GutterCol />
      <NameCol />
      <col />
    </colgroup>
    <tbody>
      <Category label="Common" />
      <Prop label="Name" h={19} tint icons={["note"]}>
        <TextValue aria-label="Name" defaultValue="DMC" />
      </Prop>
      <Prop label="Border" h={23} icons={["binding"]}>
        <Swatch />
        <SelectWrap>
          <BorderSelect aria-label="Border">
            <option>No Border</option>
          </BorderSelect>
          <SelectArrow>
            <Icon name="caretDown" size={12} />
          </SelectArrow>
        </SelectWrap>
        <WheelButton aria-label="Edit border">
          <Icon name="bevel" />
        </WheelButton>
        <Fill />
      </Prop>
      <Prop label="Mouseover Text" h={20} tint icons={["note", "binding"]}>
        <TextValue aria-label="Mouseover Text" />
      </Prop>
      <Category label="Behavior" />
      <Prop label="Enable Layout" h={25} tint icons={["binding"]}>
        <BoolValue name="layout" />
      </Prop>
      <Prop label="Combine Repaints" h={24} icons={["binding"]}>
        <BoolValue name="repaints" />
      </Prop>
      <Category label="Appearance" />
      <Prop label="Background Color" h={25} icons={["binding"]}>
        <ColorText aria-label="Background Color" defaultValue="255,255,255,0" />
        <ColorButton aria-label="Pick color">
          <Icon name="caretDown" />
        </ColorButton>
        <WheelButton aria-label="Color wheel">
          <Icon name="wheel" />
        </WheelButton>
        <Fill />
      </Prop>
      <Prop label="Width" h={19} tint>
        <TextValue aria-label="Width" defaultValue="200" $right />
      </Prop>
      <Prop label="Height" h={19}>
        <TextValue aria-label="Height" defaultValue="200" $right />
      </Prop>
      <Prop label="Texture" h={21} tint icons={["folder", "binding"]}>
        <TextValue aria-label="Texture" />
      </Prop>
    </tbody>
  </PropTable>
);

export default function App() {
  return (
    <Window>
      <Global />
      <TitleBar>
        <Icon name="logo" />
        Giga_Controls_DMC - Ignition-WIN-PKOBF9O28LT - Ignition Designer
      </TitleBar>
      <MenuBar role="menubar">
        {MENUS.map(([label, w]) => (
          <MenuSlot key={label} $w={w} role="none">
            <MenuButton role="menuitem" $open={label === "Component"}>
              <Mnemonic text={label} />
            </MenuButton>
            {label === "Component" && <ComponentMenu />}
          </MenuSlot>
        ))}
      </MenuBar>
      <Toolbars>
        <Toolbar>
          <ToolGroup>
            <Grip>
              <Dots $len={14} as="div" />
            </Grip>
            <Tools items={LEFT_TOOLS} />
          </ToolGroup>
          <Tools items={MID_TOOLS} />
        </Toolbar>
        <Toolbar>
          <ToolGroup>
            <Grip>
              <Dots $len={14} as="div" />
            </Grip>
            <Tools items={RIGHT_TOOLS} />
          </ToolGroup>
        </Toolbar>
      </Toolbars>
      <Main>
        <LeftDock>
          <Panel $grow={315}>
            <Head title="Project Browser" active />
            <TreeBox>
              <ul>
                {TREE.map((n, i) => (
                  <TreeRow key={i}>
                    {n.g.map(([v, h, e], j) => (
                      <Guide key={j} $v={v} $h={h}>
                        {e && <Expander $open={e === "-"} aria-label={`Toggle ${n.label}`} />}
                      </Guide>
                    ))}
                    <Icon name={n.icon} />
                    <TreeLabel $selected={n.selected}>{n.label}</TreeLabel>
                  </TreeRow>
                ))}
              </ul>
            </TreeBox>
          </Panel>
          <HSplit>
            <Dots $row />
          </HSplit>
          <Panel>
            <Head title="Tag Browser" />
            <DockTools $h={26} $pad={3}>
              <Tool name="binoculars" />
              <Tool name="refresh" />
              <Tool name="grid" />
              <Drop w={22} />
              <ShortRule />
              <Tool name="tagAdd" />
              <Drop w={22} />
              <Tool name="tagEdit" />
              <Tool name="opc" />
              <Tool name="stopwatch" />
              <ShortRule />
              <Tool name="upload" />
              <Tool name="download" />
            </DockTools>
            <TagBox>
              <TagTable>
                <colgroup>
                  <col width="24%" />
                  <col width="38%" />
                  <col />
                </colgroup>
                <thead>
                  <tr>
                    <th>Tag</th>
                    <th>Value</th>
                    <th>Data Type</th>
                  </tr>
                </thead>
              </TagTable>
              <Spinner>
                <SpinButton aria-label="Scroll up">
                  <Icon name="caretUp" size={6} />
                </SpinButton>
                <SpinButton aria-label="Scroll down">
                  <Icon name="caretDown" size={8} />
                </SpinButton>
              </Spinner>
            </TagBox>
          </Panel>
          <HSplit>
            <Dots $row />
          </HSplit>
          <Panel $grow={474}>
            <Head title="Property Editor" />
            <DockTools $h={25} $pad={0}>
              <Tool name="categorized" pressed />
              <Tool name="sort" />
              <ShortRule />
              <Tool name="description" />
              <ShortRule />
              <Tool name="expand" />
              <Tool name="collapse" />
              <ShortRule />
              <Tool name="filter" />
              <Drop w={32} />
            </DockTools>
            <PropBox>
              <Properties />
            </PropBox>
          </Panel>
        </LeftDock>
        <VSplit>
          <Dots $len={34} />
        </VSplit>
        <Editor>
          <Stage>
            <span />
            <HRuler>
              {H_MARKS.map((n) => (
                <HMark key={n}>{n}</HMark>
              ))}
            </HRuler>
            <VRuler>
              {V_MARKS.map((n) => (
                <VMark key={n}>{n}</VMark>
              ))}
            </VRuler>
            <Canvas>
              <TemplateArea />
              <GreenBar />
              <Handle $x={201} $y={94}>
                <Icon name="arrowsH" size={13} />
              </Handle>
              <Handle $x={94} $y={201} $turn={90}>
                <Icon name="arrowsH" size={13} />
              </Handle>
              <Handle $x={200} $y={200}>
                <Icon name="arrowsD" size={10} />
              </Handle>
            </Canvas>
          </Stage>
          <TabStrip>
            <Tab>
              <Icon name="template" />
              DMC
              <TabClose aria-label="Close DMC">
                <Icon name="closeBold" size={14} />
              </TabClose>
            </Tab>
          </TabStrip>
        </Editor>
      </Main>
      <StatusBar>
        <Icon name="tiles" />
        <span>
          <b>Template</b> <StatusName>"DMC"</StatusName>
        </span>
      </StatusBar>
    </Window>
  );
}
